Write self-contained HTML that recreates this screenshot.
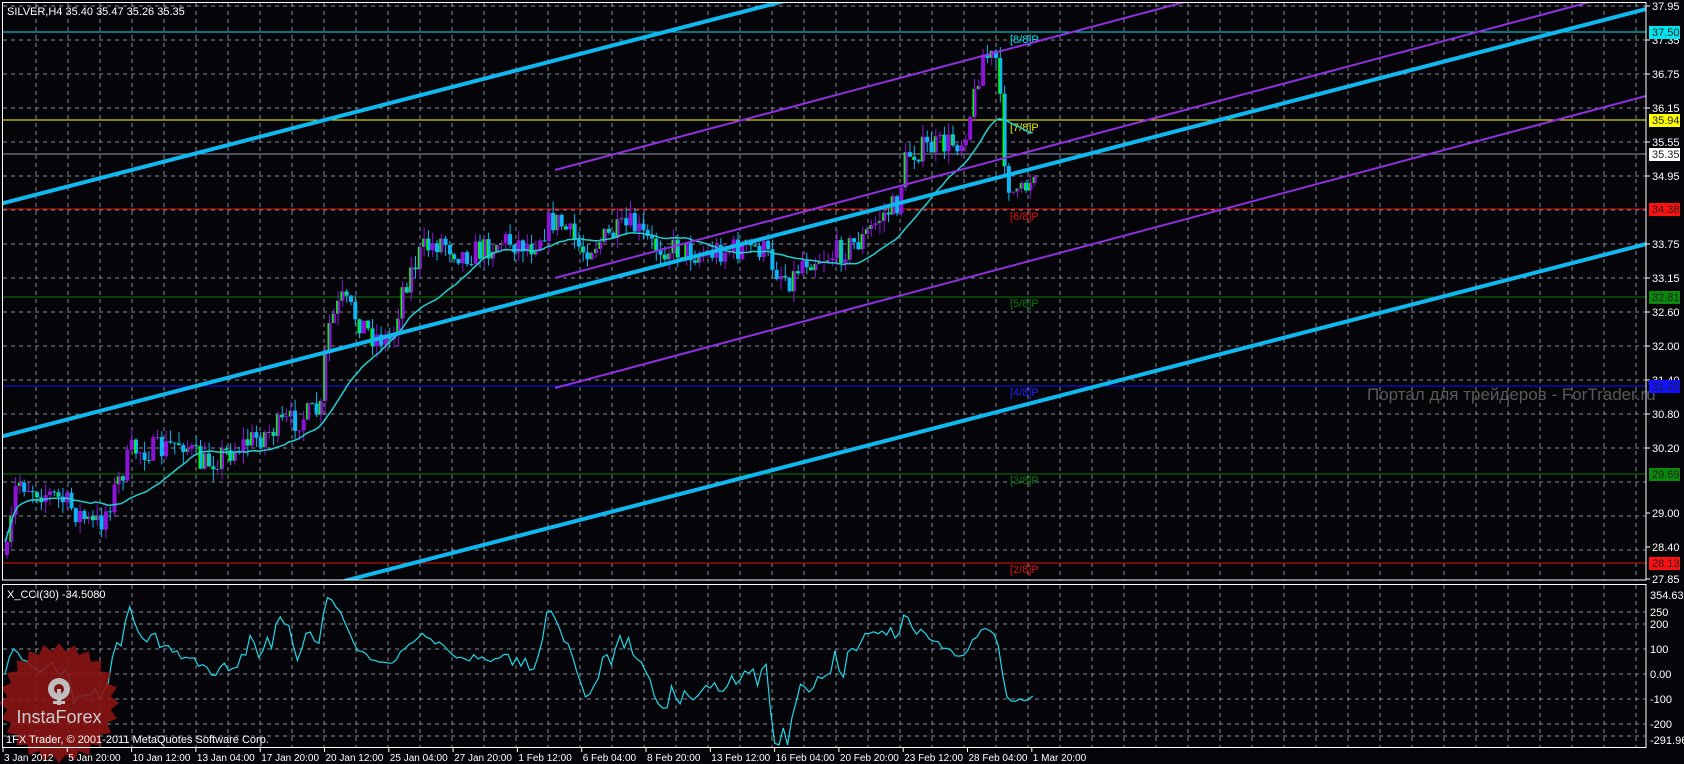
<!DOCTYPE html>
<html><head><meta charset="utf-8"><style>
html,body{margin:0;padding:0;background:#050408;width:1684px;height:764px;overflow:hidden}
svg{display:block}
text{font-family:"Liberation Sans",sans-serif}
</style></head><body>
<svg id="s" width="1684" height="764" xmlns="http://www.w3.org/2000/svg">
<rect width="1684" height="764" fill="#050408"/>
<g id="grid" stroke="#7f8c9c" stroke-width="1" stroke-dasharray="4,4"></g>
<line x1="3" y1="32" x2="1646" y2="32" stroke="#00e5ee"/>
<line x1="3" y1="120" x2="1646" y2="120" stroke="#ffff00"/>
<line x1="3" y1="154" x2="1646" y2="154" stroke="#8a9aa8"/>
<line x1="3" y1="209" x2="1646" y2="209" stroke="#e01010"/>
<line x1="3" y1="297" x2="1646" y2="297" stroke="#0a7a0a"/>
<line x1="3" y1="386" x2="1646" y2="386" stroke="#1010ff"/>
<line x1="3" y1="474" x2="1646" y2="474" stroke="#0a7a0a"/>
<line x1="3" y1="563" x2="1646" y2="563" stroke="#e01010"/>
<g font-size="11">
<text x="1010" y="43" fill="#00e5ee">[8/8]P</text>
<text x="1010" y="131" fill="#e8e800">[7/8]P</text>
<text x="1010" y="220" fill="#e01010">[6/8]P</text>
<text x="1010" y="307" fill="#0a7a0a">[5/8]P</text>
<text x="1010" y="396" fill="#2020ff">[4/8]P</text>
<text x="1010" y="484" fill="#0a7a0a">[3/8]P</text>
<text x="1010" y="573" fill="#e01010">[2/8]P</text>
</g>
<text x="1367" y="400" fill="#5a5a5a" font-size="17">Портал для трейдеров - ForTrader.ru</text>
<g id="candles"></g>
<polyline id="ma" fill="none" stroke="#20d0d0" stroke-width="1.5"/>
<clipPath id="cp"><rect x="3" y="3" width="1643" height="577"/></clipPath>
<g clip-path="url(#cp)">
<line x1="0" y1="204" x2="800" y2="-3" stroke="#10b8f0" stroke-width="4"/>
<line x1="0" y1="437" x2="1646" y2="9" stroke="#10b8f0" stroke-width="4"/>
<line x1="344" y1="581" x2="1646" y2="244" stroke="#10b8f0" stroke-width="4"/>
<line x1="555" y1="170" x2="1646" y2="-121" stroke="#9030e0" stroke-width="2"/>
<line x1="555" y1="278" x2="1646" y2="-13" stroke="#9030e0" stroke-width="2"/>
<line x1="555" y1="388" x2="1646" y2="96" stroke="#9030e0" stroke-width="2"/>
</g>
<polyline id="cci" fill="none" stroke="#20d8e8" stroke-width="1.2"/>
<g transform="translate(59,703)" opacity="0.88">
<polygon id="star" fill="#8e1414"/>
<g fill="#d8d8d8">
<circle cx="0" cy="-14" r="11"/>
<circle cx="0" cy="-14" r="5" fill="#8e1414"/>
<rect x="-2" y="-14" width="4" height="16" fill="#d8d8d8"/>
<rect x="-6" y="-2" width="12" height="3"/>
</g>
<text x="0" y="20" text-anchor="middle" fill="#e8e8e8" font-size="18">InstaForex</text>
</g>
<rect x="2.5" y="2.5" width="1643.5" height="577.5" fill="none" stroke="#fff"/>
<rect x="2.5" y="584.5" width="1643.5" height="163" fill="none" stroke="#fff"/>
<text x="7" y="15" fill="#fff" font-size="11">SILVER,H4  35.40 35.47 35.26 35.35</text>
<text x="7" y="598" fill="#fff" font-size="11">X_CCI(30) -34.5080</text>
<text x="6" y="743" fill="#fff" font-size="11">1FX Trader, © 2001-2011 MetaQuotes Software Corp.</text>
<g id="axis" font-size="11" fill="#fff"></g>
<g id="tl" font-size="10" fill="#fff"></g>
</svg>
<script>
var NS="http://www.w3.org/2000/svg";
function el(p,t,a,txt){var e=document.createElementNS(NS,t);for(var k in a)e.setAttribute(k,a[k]);if(txt!=null)e.textContent=txt;p.appendChild(e);return e;}
var g=document.getElementById('grid');
for(var x=36;x<1646;x+=32){el(g,'line',{x1:x,y1:3,x2:x,y2:580});el(g,'line',{x1:x,y1:585,x2:x,y2:747});}
for(var y=6;y<580;y+=34){el(g,'line',{x1:3,y1:y,x2:1646,y2:y});}
[612,624,649,674,699,724,736].forEach(function(y){el(g,'line',{x1:3,y1:y,x2:1646,y2:y});});
var ax=document.getElementById('axis');
var labs=[["37.95",6],["37.35",40],["36.75",74],["36.15",108],["35.55",142],["34.95",176],["33.75",244],["33.15",278],["32.60",312],["32.00",346],["31.40",380],["30.80",414],["30.20",448],["29.00",513],["28.40",547],["27.85",579]];
labs.forEach(function(l){el(ax,'line',{x1:1646,y1:l[1],x2:1650,y2:l[1],stroke:'#fff'});el(ax,'text',{x:1652,y:l[1]+4},l[0]);});
[["37.50",32,"#00e5ee"],["35.94",120,"#ffff00"],["35.35",154,"#ffffff"],["34.38",209,"#ff1010"],["32.81",297,"#0a8a0a"],["31.25",386,"#1010ff"],["29.69",474,"#0a8a0a"],["28.13",563,"#ff1010"]].forEach(function(l){el(ax,'rect',{x:1649,y:l[1]-6,width:31,height:13,fill:l[2]});el(ax,'text',{x:1652,y:l[1]+4,fill:'#222'},l[0]);});
[["354.6316",599],["250",616],["200",628],["100",653],["0.00",678],["-100",703],["-200",728],["-291.967",744]].forEach(function(l){el(ax,'text',{x:1650,y:l[1]},l[0]);});
var tl=document.getElementById('tl');
["3 Jan 2012","5 Jan 20:00","10 Jan 12:00","13 Jan 04:00","17 Jan 20:00","20 Jan 12:00","25 Jan 04:00","27 Jan 20:00","1 Feb 12:00","6 Feb 04:00","8 Feb 20:00","13 Feb 12:00","16 Feb 04:00","20 Feb 20:00","23 Feb 12:00","28 Feb 04:00","1 Mar 20:00"].forEach(function(t,i){var x=3+64.3*i;el(tl,'line',{x1:x,y1:748,x2:x,y2:752,stroke:'#fff'});el(tl,'text',{x:x+1,y:761},t);});
var pts=[];for(var i=0;i<48;i++){var r=i%2?52:60,a=i*Math.PI/24;pts.push((r*Math.cos(a)).toFixed(1)+","+(r*Math.sin(a)).toFixed(1));}
document.getElementById('star').setAttribute('points',pts.join(' '));
var K=[[5,555],[15,480],[25,485],[60,500],[90,525],[100,520],[130,450],[160,450],[180,440],[200,465],[240,445],[280,425],[320,410],[325,330],[340,300],[370,335],[390,340],[400,290],[420,250],[440,240],[460,255],[480,250],[500,240],[530,245],[550,220],[560,225],[580,250],[610,235],[630,225],[650,245],[680,250],[700,255],[720,250],[760,248],[775,270],[790,280],[800,260],[830,255],[860,240],[880,215],[895,205],[905,155],[915,150],[940,145],[960,140],[972,100],[980,55],[995,60],[1000,130],[1005,180],[1015,200],[1025,185],[1036,160]];
function interp(x){for(var i=1;i<K.length;i++){if(x<=K[i][0]){var a=K[i-1],b=K[i];return a[1]+(b[1]-a[1])*(x-a[0])/(b[0]-a[0]);}}return K[K.length-1][1];}
var seed=7;function rnd(){seed=(seed*16807)%2147483647;return seed/2147483647;}
var cg=document.getElementById('candles');var bars=[];var prev=interp(5);
for(var x=5;x<=1036;x+=4.3){var c=interp(x)+(rnd()-0.5)*26;var o=prev;var h=Math.min(o,c)-rnd()*12;var l=Math.max(o,c)+rnd()*12;bars.push({x:x,o:o,c:c,h:h,l:l});prev=c;}
bars.forEach(function(b){var up=b.c<b.o;var col=up?'#8c14d8':'#10b4f4';el(cg,'line',{x1:b.x+2,y1:b.h,x2:b.x+2,y2:b.l,stroke:col});var t=Math.min(b.o,b.c),hh=Math.max(1,Math.abs(b.o-b.c));el(cg,'rect',{x:b.x,y:t,width:4,height:hh,fill:col});if(rnd()<0.5)el(cg,'rect',{x:b.x,y:t,width:1.5,height:hh,fill:'#00ff00'});});
var ma=[],N=21;for(var i=0;i<bars.length;i++){var s=0,n=0;for(var j=Math.max(0,i-N+1);j<=i;j++){s+=bars[j].c;n++;}ma.push(bars[i].x.toFixed(1)+","+(s/n).toFixed(1));}
document.getElementById('ma').setAttribute('points',ma.join(' '));
var cc=[],P=30;for(var i=0;i<bars.length;i++){var tp=function(k){return -(bars[k].h+bars[k].l+bars[k].c)/3;};var s=0,n=0;for(var j=Math.max(0,i-P+1);j<=i;j++){s+=tp(j);n++;}var m=s/n,d=0;for(var j=Math.max(0,i-P+1);j<=i;j++)d+=Math.abs(tp(j)-m);d=d/n||1;var v=(tp(i)-m)/(0.015*d);var y=674-v*0.25;y=Math.max(588,Math.min(745,y));cc.push(bars[i].x.toFixed(1)+","+y.toFixed(1));}
document.getElementById('cci').setAttribute('points',cc.join(' '));
</script>
</body></html>
